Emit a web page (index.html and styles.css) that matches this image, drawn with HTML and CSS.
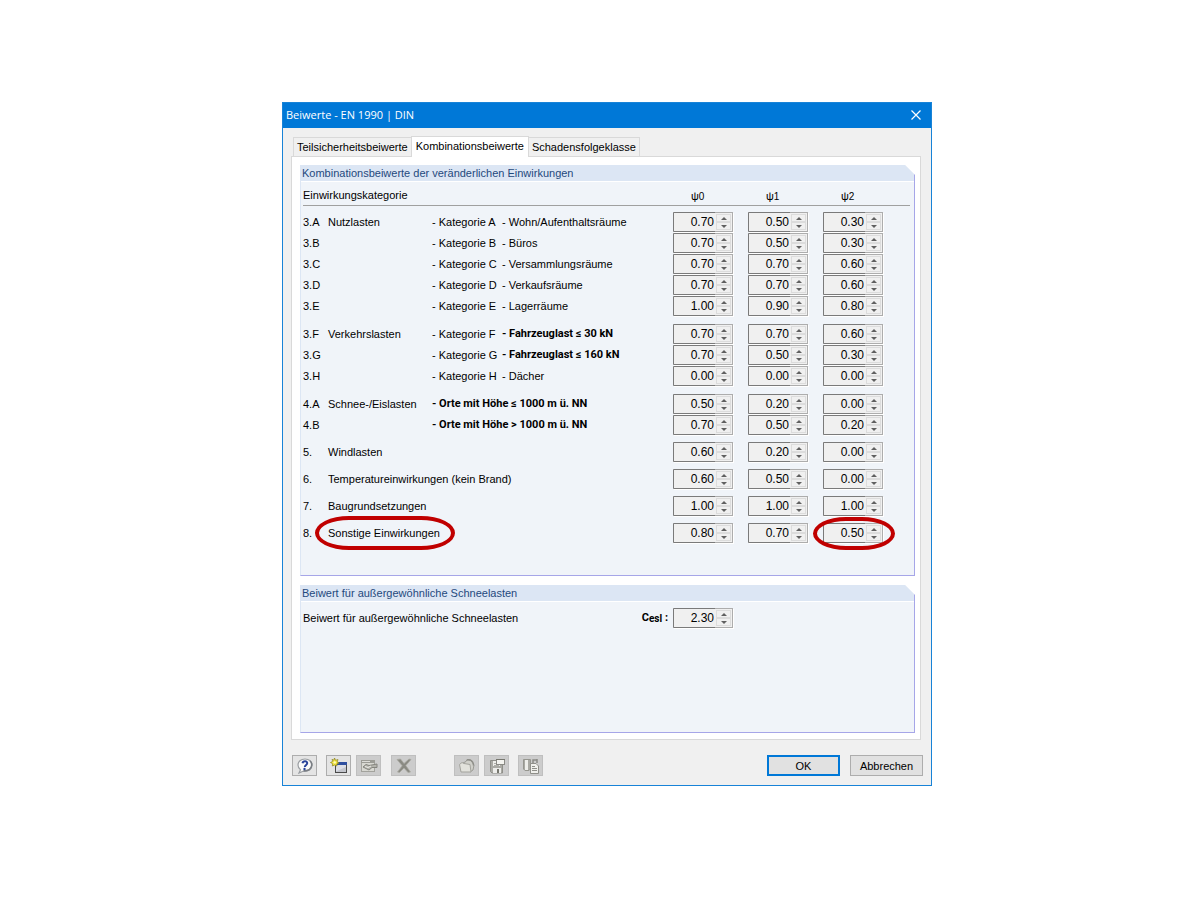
FILE: index.html
```html
<!DOCTYPE html>
<html lang="de">

<head>
    <meta charset="UTF-8">
    <meta name="viewport" content="width=device-width, initial-scale=1.0">
    <title>Beiwerte - EN 1990 | DIN</title>
    <link rel="stylesheet" href="styles.css">
</head>

<body>
    <main class="dialog">
        <header class="titlebar">
            <h1>Beiwerte - EN 1990 | DIN</h1>
            <button class="close" aria-label="Schließen">
                <svg width="10" height="10" viewBox="0 0 10 10"><path d="M0.5 0.5 L9.5 9.5 M9.5 0.5 L0.5 9.5" stroke="#fff" stroke-width="1.2"/></svg>
            </button>
        </header>

        <div class="content">
            <div class="tabs" role="tablist">
                <button class="tab" role="tab">Teilsicherheitsbeiwerte</button>
                <button class="tab active" role="tab" aria-selected="true">Kombinationsbeiwerte</button>
                <button class="tab" role="tab">Schadensfolgeklasse</button>
            </div>

            <div class="pane">
                <section class="group">
                    <h2>Kombinationsbeiwerte der veränderlichen Einwirkungen</h2>
                    <div class="group-body">
                        <table class="factors">
                            <colgroup>
                                <col class="col-no">
                                <col class="col-action">
                                <col class="col-category">
                                <col>
                                <col class="col-psi">
                                <col class="col-psi">
                                <col class="col-last">
                            </colgroup>
                            <thead>
                                <tr>
                                    <th colspan="4">Einwirkungskategorie</th>
                                    <th class="psi">ψ<small>0</small></th>
                                    <th class="psi">ψ<small>1</small></th>
                                    <th class="psi">ψ<small>2</small></th>
                                </tr>
                            </thead>
                            <tbody id="rows"></tbody>
                        </table>
                    </div>
                </section>

                <section class="group snow">
                    <h2>Beiwert für außergewöhnliche Schneelasten</h2>
                    <div class="group-body snow-row">
                        <span class="snow-text">Beiwert für außergewöhnliche Schneelasten</span>
                        <label class="snow-label" for="cesl">C<sub>esl</sub> :</label>
                        <span id="snow"></span>
                    </div>
                </section>
            </div>
        </div>

        <footer class="footer">
            <div class="tools">
                <button class="tool" aria-label="Hilfe">
                    <svg width="18" height="16" viewBox="0 0 18 16">
                        <path d="M9 1 C4.8 1 2 3.6 2 7 C2 9 3 10.600 4.500 11.700 L3 15 L7.500 13 C13 13.600 16 11 16 7 C16 3.600 13.200 1 9 1 Z" fill="#fafafa" stroke="#9a9ea2" stroke-width="1.2"/>
                        <path d="M14 3 C16.500 5 16.500 9.500 13 11.800 C11 13 9 13 7.500 13" fill="none" stroke="#7a7e84" stroke-width="1.600"/>
                        <path d="M6.500 5.200 C7 2.800 11.300 2.600 11.200 5.200 C11.100 7 9 6.900 8.800 9" fill="none" stroke="#27429a" stroke-width="2"/>
                        <circle cx="8.500" cy="11" r="1.200" fill="#27429a"/>
                    </svg>
                </button>
                <button class="tool new" aria-label="Neu">
                    <svg width="18" height="16" viewBox="0 0 18 16">
                        <rect x="5.500" y="5.500" width="11" height="9" fill="#dcdee6" stroke="#4a4a4a"/>
                        <path d="M6 13.500 L16 9 V14 H6 Z" fill="#c3c5cc"/>
                        <rect x="5" y="4" width="12" height="3" fill="#2f4f9f"/>
                        <path d="M4.500 0 L5.600 2.300 L8 1.500 L7.200 3.900 L9 5 L6.800 5.900 L7 8 L4.700 7 L2.300 8 L2.700 5.700 L0.500 4.500 L2.700 3.400 L2 1.300 L3.900 2.200 Z" fill="#f2e43a" stroke="#8d8420" stroke-width="0.700"/>
                        <circle cx="4.700" cy="4.400" r="1.200" fill="#fffbc0"/>
                    </svg>
                </button>
                <button class="tool edit" disabled aria-label="Bearbeiten">
                    <svg width="18" height="16" viewBox="0 0 18 16">
                        <rect x="1.500" y="2.500" width="13" height="11" fill="#d8d8d2" stroke="#a3a39d"/>
                        <rect x="1" y="2" width="14" height="3" fill="#9b9b95"/>
                        <rect x="2" y="3" width="8" height="1" fill="#dcdcd8"/>
                        <path d="M3 9 L6 6.500 L9 7.500 L17 6 V9.500 L12 9.500 L9 12 L6 10.500 Z" fill="#b4b4ad" stroke="#84847e"/>
                        <path d="M5 8.500 L8 9.500 L11 8" fill="none" stroke="#ecece8"/>
                    </svg>
                </button>
                <button class="tool delete" disabled aria-label="Löschen">
                    <svg width="18" height="16" viewBox="0 0 18 16">
                        <path d="M2 1.500 L5.500 1 L9 5.500 L14 1 L16 1.500 L10.800 7.600 L15.500 14 L13 14.500 L9 10 L4.500 14.500 L2.500 14 L7.200 7.800 Z" fill="#8a8a83" stroke="#a9a9a2" stroke-width="0.800"/>
                    </svg>
                </button>
                <button class="tool open" disabled aria-label="Öffnen">
                    <svg width="18" height="16" viewBox="0 0 18 16">
                        <path d="M5 5 L8 3.500 L9 1.500 L13 2.500 L16 7 L15 12 L12 14 L6 8 Z" fill="#d0d0ca" stroke="#9b9b95"/>
                        <path d="M1.500 6.500 L4 4.500 L6 5.500 L12 6.500 L13 14 L3 14 Z" fill="#e2e2dc" stroke="#a3a39d"/>
                        <path d="M9 2 C13 1 15.500 4 15.500 7.500" fill="none" stroke="#8f8f89" stroke-width="1.400"/>
                    </svg>
                </button>
                <button class="tool" disabled aria-label="Speichern">
                    <svg width="18" height="16" viewBox="0 0 18 16">
                        <path d="M2.500 2.500 H14.500 V15 H4 L2.500 13.500 Z" fill="#aaaaa4" stroke="#8f8f89"/>
                        <rect x="5" y="3" width="7" height="5" fill="#eeeeea"/>
                        <path d="M6 5.500 H11 M6 7.500 H11" stroke="#b0b0aa"/>
                        <rect x="5" y="10" width="8" height="5" fill="#ededea"/>
                        <rect x="9" y="11" width="2" height="4" fill="#77776f"/>
                        <rect x="8.500" y="1.500" width="8" height="5" fill="#f4f4f0" stroke="#8b8b85"/>
                        <path d="M8 1.500 H17" stroke="#77776f"/>
                    </svg>
                </button>
                <button class="tool copy" disabled aria-label="Standard übernehmen">
                    <svg width="18" height="16" viewBox="0 0 18 16">
                        <path d="M1.500 1.500 H8.500 V11 L7 12.500 H3 L1.500 11 Z" fill="#a9a9a3" stroke="#96968f"/>
                        <rect x="3" y="2" width="3" height="10" fill="#eeeeea"/>
                        <path d="M11 5 V2 H15 M15 1 V5" fill="none" stroke="#8b8b85" stroke-width="1.500"/>
                        <path d="M8.500 5.500 H14 L16.500 8 V15.500 H8.500 Z" fill="#f0f0ec" stroke="#8f8f89"/>
                        <path d="M10 8.500 H13 M10 10.500 H15 M10 12.500 H15" stroke="#8f8f89"/>
                    </svg>
                </button>
            </div>
            <button class="btn primary">OK</button>
            <button class="btn">Abbrechen</button>
        </footer>
    </main>

    <script>
        // no, action, category, description, psi values, options
        const rows = [
            ['3.A', 'Nutzlasten', '- Kategorie A', '- Wohn/Aufenthaltsräume', ['0.70', '0.50', '0.30']],
            ['3.B', '', '- Kategorie B', '- Büros', ['0.70', '0.50', '0.30']],
            ['3.C', '', '- Kategorie C', '- Versammlungsräume', ['0.70', '0.70', '0.60']],
            ['3.D', '', '- Kategorie D', '- Verkaufsräume', ['0.70', '0.70', '0.60']],
            ['3.E', '', '- Kategorie E', '- Lagerräume', ['1.00', '0.90', '0.80']],
            ['3.F', 'Verkehrslasten', '- Kategorie F', '- Fahrzeuglast ≤ 30 kN', ['0.70', '0.70', '0.60'], { row: 'first', bold: true }],
            ['3.G', '', '- Kategorie G', '- Fahrzeuglast ≤ 160 kN', ['0.70', '0.50', '0.30'], { bold: true }],
            ['3.H', '', '- Kategorie H', '- Dächer', ['0.00', '0.00', '0.00']],
            ['4.A', 'Schnee-/Eislasten', '', '- Orte mit Höhe ≤ 1000 m ü. NN', ['0.50', '0.20', '0.00'], { row: 'first', bold: true }],
            ['4.B', '', '', '- Orte mit Höhe > 1000 m ü. NN', ['0.70', '0.50', '0.20'], { bold: true }],
            ['5.', 'Windlasten', '', '', ['0.60', '0.20', '0.00'], { row: 'single' }],
            ['6.', 'Temperatureinwirkungen (kein Brand)', '', '', ['0.60', '0.50', '0.00'], { row: 'single' }],
            ['7.', 'Baugrundsetzungen', '', '', ['1.00', '1.00', '1.00'], { row: 'single' }],
            ['8.', 'Sonstige Einwirkungen', '', '', ['0.80', '0.70', '0.50'], { row: 'single', marked: true }]
        ];

        function spinner(value, label, id) {
            const box = document.createElement('span');
            box.className = 'spin';
            box.innerHTML =
                `<input type="number" step="0.01" min="0" value="${value}" readonly aria-label="${label}"${id ? ` id="${id}"` : ''}>` +
                '<span class="arrows">' +
                '<button class="up" disabled aria-label="Erhöhen"></button>' +
                '<button class="down" disabled aria-label="Verringern"></button>' +
                '</span>';
            return box;
        }

        function addCell(tr, text, span, className) {
            const td = document.createElement('td');
            td.textContent = text;
            td.colSpan = span;
            if (className) td.className = className;
            tr.appendChild(td);
            return td;
        }

        const body = document.getElementById('rows');
        rows.forEach(([no, action, category, description, values, opts = {}]) => {
            const tr = document.createElement('tr');
            if (opts.row) tr.className = opts.row;
            addCell(tr, no, 1);

            const bold = opts.bold ? 'bold' : '';
            if (category) {
                addCell(tr, action, 1);
                addCell(tr, category, 1);
                addCell(tr, description, 1, bold);
            } else if (description) {
                addCell(tr, action, 1);
                addCell(tr, description, 2, bold);
            } else {
                const td = addCell(tr, '', 3);
                const name = document.createElement('span');
                name.textContent = action;
                if (opts.marked) name.className = 'marked';
                td.appendChild(name);
            }

            values.forEach((value, i) => {
                const td = addCell(tr, '', 1);
                const box = spinner(value, `${no} ψ${i}`);
                if (opts.marked && i === 2) box.classList.add('marked');
                td.appendChild(box);
            });
            body.appendChild(tr);
        });

        document.getElementById('snow').appendChild(spinner('2.30', 'Cesl', 'cesl'));
    </script>
</body>

</html>
```
FILE: styles.css
```css
* {
    box-sizing: border-box;
}

body {
    margin: 0;
    padding: 102px 268px 100px 282px;
    background: #fff;
    color: #000;
    font: 11px/16px "Liberation Sans", Arial, sans-serif;
}

button,
input {
    font: inherit;
    color: inherit;
    margin: 0;
    padding: 0;
    border-radius: 0;
}

h1,
h2 {
    margin: 0;
    font-weight: normal;
}

.dialog {
    background: #f0f0f0;
    border: 1px solid #1883d7;
}

/* title bar */
.titlebar {
    display: flex;
    justify-content: space-between;
    align-items: center;
    height: 25px;
    padding: 0 10px 1px 3px;
    background: #0078d7;
    color: #fff;
}

.titlebar h1 {
    font: 11px/16px "Open Sans", "Noto Sans", sans-serif;
}

.close {
    display: flex;
    border: 0;
    background: none;
}

/* tabs */
.content {
    padding: 7px 10px 0 8px;
}

.tabs {
    display: flex;
    align-items: flex-end;
    padding-left: 2px;
    height: 21px;
}

.tab {
    height: 19px;
    padding: 0 3px;
    background: #f0f0f0;
    border: 1px solid #d9d9d9;
    border-bottom: 0;
    margin-right: -1px;
}

.tab.active {
    height: 21px;
    padding: 0 4px 2px;
    background: #fff;
    margin-bottom: -1px;
    position: relative;
}

.pane {
    display: flex;
    flex-direction: column;
    gap: 9px;
    padding: 8px 5px 6px 8px;
    background: #fff;
    border: 1px solid #d9d9d9;
}

/* group boxes with a cut corner */
.group {
    background: #f0f4f9;
    border: 1px solid #a6a6e8;
    border-top: 0;
    border-left-color: #dce6f4;
    clip-path: polygon(0 0, calc(100% - 10px) 0, 100% 10px, 100% 100%, 0 100%);
}

.group h2 {
    padding-left: 1px;
    background: #dce6f4;
    border-bottom: 1px solid #fff;
    color: #1f497d;
    font-size: 11px;
}

.group-body {
    padding: 4px 4px 32px 2px;
}

/* table of factors */
.factors {
    width: 100%;
    table-layout: fixed;
    border-collapse: collapse;
}

.col-no {
    width: 25px;
}

.col-action {
    width: 104px;
}

.col-category {
    width: 70px;
}

.col-psi {
    width: 75px;
}

.col-last {
    width: 87px;
}

.factors th,
.factors td {
    padding: 0;
    text-align: left;
    font-weight: normal;
    white-space: nowrap;
}

.factors th {
    height: 19px;
    line-height: 15px;
    border-bottom: 1px solid #a0a0a0;
}

.factors .psi {
    padding: 3px 0 0 18px;
}

.psi small {
    font-size: 10px;
}

.factors td {
    height: 21px;
    vertical-align: bottom;
    line-height: 20px;
}

.factors tbody tr:first-child td {
    height: 27px;
}

.factors tr.first td {
    height: 28px;
}

.factors tr.single td {
    height: 27px;
}

.factors .bold {
    font-family: Roboto, "Liberation Sans", sans-serif;
    font-weight: bold;
}

/* number boxes */
.spin {
    display: flex;
    width: 60px;
    height: 20px;
    border: 1px solid #adadad;
    border-left-color: #7a7a7a;
    background: #f0f0f0;
    box-shadow: 1px 1px 0 #fff;
}

.spin input {
    flex: 1;
    min-width: 0;
    height: 20px;
    margin: -1px 0;
    padding-right: 1px;
    border: 1px solid #7a7a7a;
    border-width: 1px 0;
    background: #f0f0f0;
    text-align: right;
    font-size: 12px;
    appearance: textfield;
    outline: 0;
}

.spin input::-webkit-inner-spin-button {
    appearance: none;
    margin: 0;
}

.arrows {
    display: flex;
    flex-direction: column;
    width: 17px;
    padding: 1px 1px 0 1px;
}

.arrows button {
    display: flex;
    align-items: center;
    justify-content: center;
    height: 8px;
    border: 1px solid #dcdcdc;
    background: #f0f0f0;
}

.arrows button::after {
    content: "";
    border: 3px solid transparent;
}

.arrows .up::after {
    border-top: 0;
    border-bottom-color: #606060;
}

.arrows .down::after {
    border-bottom: 0;
    border-top-color: #606060;
}

/* red marker ring around a value */
.marked {
    position: relative;
}

.marked::after {
    content: "";
    position: absolute;
    inset: -11px -15px -11px -13px;
    border: 4px solid #c00000;
    border-radius: 36px / 18px;
}

.spin.marked::after {
    inset: -7px -13px -8px -11px;
}

/* snow load factor */
.snow-row {
    display: flex;
    align-items: center;
    padding: 6px 181px 104px 2px;
}

.snow-text {
    flex: 1;
}

.snow-label {
    margin-right: 5px;
    font-family: Roboto, "Liberation Sans", sans-serif;
    font-weight: bold;
}

.snow-label sub {
    font-size: 10px;
    line-height: 10px;
    vertical-align: -1px;
}

/* bottom bar */
.footer {
    display: flex;
    align-items: center;
    gap: 10px;
    padding: 15px 8px 9px 9px;
}

.tools {
    display: flex;
    flex: 1;
    gap: 5px;
}

.tool {
    display: flex;
    align-items: center;
    justify-content: center;
    width: 25px;
    height: 21px;
    border: 1px solid #adadad;
    background: #e4e4e4;
}

.tool:disabled {
    border-color: #bfbfbf;
    background: #cccccc;
}

.tool.new,
.tool.copy {
    margin-left: 4px;
}

.tool.delete {
    margin-left: 5px;
}

.tool.open {
    margin-left: 33px;
}

.btn {
    width: 73px;
    height: 21px;
    border: 1px solid #adadad;
    background: #e1e1e1;
}

.btn.primary {
    border: 2px solid #0078d7;
}
```
